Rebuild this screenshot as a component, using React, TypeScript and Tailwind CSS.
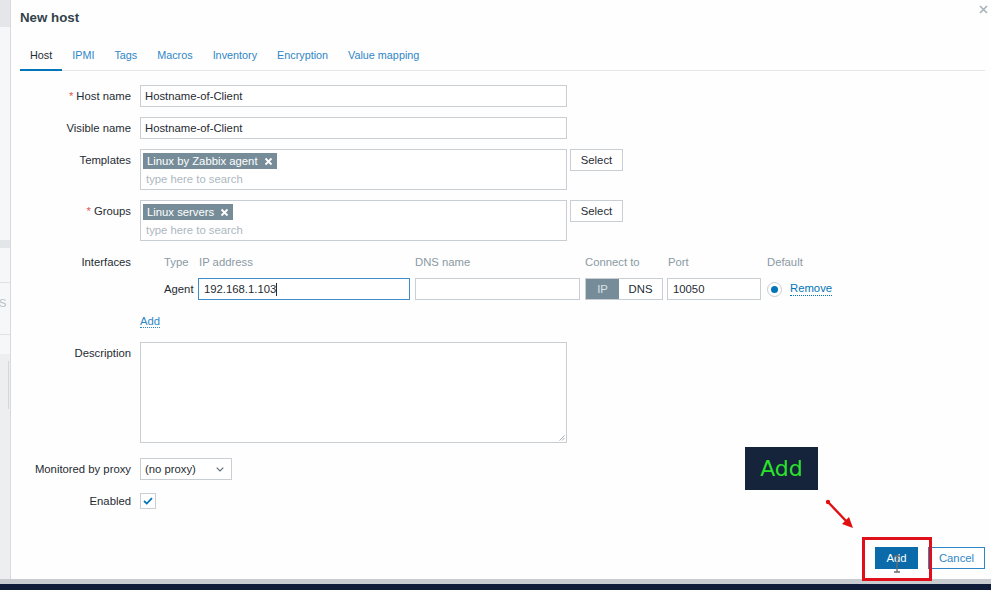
import React from "react";

const font = { fontFamily: '"Liberation Sans", Arial, sans-serif' };

function SideStrip() {
  // sliver of the page behind the modal
  return (
    <div className="w-[11px] shrink-0 flex flex-col border-r border-[#d6dade]">
      <div className="h-[27px] bg-[#e4e6e9]" />
      <div className="h-[213px] bg-[#f6f7f8]" />
      <div className="h-[8px] bg-[#e3e6e8]" />
      <div className="h-[35px] bg-[#f6f7f8] border-b border-[#dfe2e5]" />
      <div className="h-[52px] bg-[#f6f7f8] border-b border-[#dfe2e5] relative">
        <span className="absolute left-[-1px] top-[12px] text-[11px] text-[#b7bfc5]">S</span>
      </div>
      <div className="h-[19px] bg-[#f6f7f8]" />
      <div className="flex-1 bg-[#eceef0] pl-[8px] pt-[7px]">
        <div className="w-px h-[48px] bg-[#d3d7da]" />
      </div>
    </div>
  );
}

function Label({ text, required }: { text: string; required?: boolean }) {
  return (
    <div className="w-[111px] shrink-0 text-right leading-[22px] text-[#1f2c33]">
      {required && <span className="text-[#e45959] mr-[3px]">*</span>}
      {text}
    </div>
  );
}

function TextInput({ value, w = 427 }: { value: string; w?: number }) {
  return (
    <div
      className="h-[22px] border border-[#c8ced2] bg-white pl-[4px] leading-[20px] text-[#1f2c33]"
      style={{ width: w }}
    >
      {value}
    </div>
  );
}

function SelectBtn() {
  return (
    <div className="w-[53px] h-[22px] border border-[#c8ced2] bg-white text-center leading-[20px] text-[#1f2c33]">
      Select
    </div>
  );
}

function Multiselect({ tag }: { tag: string }) {
  return (
    <div className="w-[427px] h-[41px] border border-[#c8ced2] bg-white pt-[3px] pl-[2px]">
      <span className="inline-flex items-center h-[16px] bg-[#768d99] text-white px-[4px] leading-[16px]">
        {tag}
        <svg width="9" height="9" viewBox="0 0 9 9" className="ml-[6px]">
          <path d="M1.5 1.5 L7.5 7.5 M7.5 1.5 L1.5 7.5" stroke="#fff" strokeWidth="1.8" />
        </svg>
      </span>
      <div className="pl-[3px] mt-[1px] leading-[16px] text-[#acb8bf]">type here to search</div>
    </div>
  );
}

const tabs = ["Host", "IPMI", "Tags", "Macros", "Inventory", "Encryption", "Value mapping"];

export default function App() {
  return (
    <div className="relative w-[991px] h-[590px] overflow-hidden flex flex-col bg-[#0f1b38]" style={font}>
      <div className="flex h-[579px]">
        <SideStrip />
        <div className="flex-1 bg-[#fefefe] flex flex-col pl-[9px] pr-[6px] text-[11.3px]">
          <div className="flex justify-between">
            <h1 className="mt-[10px] text-[13.3px] leading-[16px] font-bold text-[#34424b]">New host</h1>
            <svg width="9" height="9" viewBox="0 0 9 9" className="mt-[5px] -mr-[3px]">
              <path d="M1 1 L8 8 M8 1 L1 8" stroke="#a6b1b8" strokeWidth="1.6" />
            </svg>
          </div>

          <div className="mt-[22px] flex border-b border-[#e4e7e9] text-[10.8px]">
            {tabs.map((t, i) => (
              <div
                key={t}
                className={`px-[10px] pb-[7px] leading-[14px] -mb-px border-b-2 ${
                  i === 0 ? "border-[#0275b8] text-[#1f2c33]" : "border-transparent text-[#2f86c6]"
                }`}
              >
                {t}
              </div>
            ))}
          </div>

          <div className="mt-[14px] flex flex-col gap-[10px]">
            <div className="flex gap-[9px]">
              <Label text="Host name" required />
              <TextInput value="Hostname-of-Client" />
            </div>
            <div className="flex gap-[9px]">
              <Label text="Visible name" />
              <TextInput value="Hostname-of-Client" />
            </div>
            <div className="flex gap-[9px]">
              <Label text="Templates" />
              <div className="flex gap-[3px]">
                <Multiselect tag="Linux by Zabbix agent" />
                <SelectBtn />
              </div>
            </div>
            <div className="flex gap-[9px]">
              <Label text="Groups" required />
              <div className="flex gap-[3px]">
                <Multiselect tag="Linux servers" />
                <SelectBtn />
              </div>
            </div>

            <div className="flex gap-[9px]">
              <Label text="Interfaces" />
              <div className="flex flex-col pt-[3px]">
                <div className="flex h-[16px] leading-[16px] text-[#8a9aa3]">
                  <div className="w-[58px] pl-[24px]">Type</div>
                  <div className="w-[212px] pl-[1px]">IP address</div>
                  <div className="w-[165px] ml-[5px]">DNS name</div>
                  <div className="w-[78px] ml-[5px]">Connect to</div>
                  <div className="w-[94px] ml-[4px] pl-[1px]">Port</div>
                  <div className="ml-[6px]">Default</div>
                </div>
                <div className="flex items-center mt-[8px] h-[22px] text-[#1f2c33]">
                  <div className="w-[58px] pl-[24px]">Agent</div>
                  <div className="w-[212px] h-[22px] border border-[#3f8ccb] bg-white pl-[5px] leading-[20px] flex items-center">
                    192.168.1.103
                    <span className="inline-block w-px h-[13px] bg-[#1f2c33]" />
                  </div>
                  <div className="w-[165px] h-[22px] ml-[5px] border border-[#c8ced2] bg-white" />
                  <div className="w-[78px] h-[22px] ml-[5px] flex border border-[#c8ced2]">
                    <div className="w-[33px] bg-[#768d99] text-[#dce3e7] text-center leading-[20px]">IP</div>
                    <div className="flex-1 bg-white text-center leading-[20px]">DNS</div>
                  </div>
                  <div className="w-[94px] h-[22px] ml-[4px] border border-[#c8ced2] bg-white pl-[5px] leading-[20px]">
                    10050
                  </div>
                  <div className="ml-[6px] w-[15px] h-[15px] rounded-full border border-[#c8ced2] bg-white flex items-center justify-center">
                    <div className="w-[7px] h-[7px] rounded-full bg-[#0275b8]" />
                  </div>
                  <span className="ml-[8px] text-[#0275b8] border-b border-dotted border-[#0275b8] leading-[13px]">
                    Remove
                  </span>
                </div>
                <div className="mt-[13px] h-[19px]">
                  <span className="text-[#2f86c6] border-b border-dotted border-[#2f86c6] leading-[14px]">Add</span>
                </div>
              </div>
            </div>

            <div className="flex gap-[9px]">
              <Label text="Description" />
              <div className="relative w-[427px] h-[101px] border border-[#c8ced2] bg-white">
                <svg width="6" height="6" viewBox="0 0 6 6" className="absolute right-[1px] bottom-[1px]">
                  <path d="M5.5 0.5 L0.5 5.5 M5.5 3 L3 5.5" stroke="#9aa5ab" strokeWidth="0.9" />
                </svg>
              </div>
            </div>

            <div className="flex gap-[9px] items-center mt-[5px]">
              <Label text="Monitored by proxy" />
              <div className="w-[92px] h-[22px] border border-[#c8ced2] bg-white flex items-center justify-between pl-[4px] pr-[7px] text-[#1f2c33]">
                (no proxy)
                <svg width="8" height="5" viewBox="0 0 8 5">
                  <path d="M0.7 0.7 L4 4 L7.3 0.7" stroke="#5a6a73" strokeWidth="1.1" fill="none" />
                </svg>
              </div>
            </div>

            <div className="flex gap-[9px] items-center">
              <Label text="Enabled" />
              <div className="w-[16px] h-[16px] border border-[#c8ced2] bg-white flex items-center justify-center">
                <svg width="10" height="8" viewBox="0 0 10 8">
                  <path d="M1 4 L3.8 6.6 L9 1.2" stroke="#0275b8" strokeWidth="1.8" fill="none" />
                </svg>
              </div>
            </div>
          </div>

          <div className="mt-auto flex justify-end gap-[10px] pb-[10px]">
            <div className="w-[43px] h-[22px] bg-[#0a6aaa] text-white text-center leading-[22px]">Add</div>
            <div className="w-[57px] h-[22px] border border-[#2f86c6] bg-white text-[#2f86c6] text-center leading-[20px]">
              Cancel
            </div>
          </div>
        </div>
      </div>
      <div className="h-[5px] bg-[#c8ccd0]" />
      <div className="flex-1 bg-[#0f1b38]" />

      {/* annotation overlay */}
      <div
        className="absolute left-[745px] top-[447px] w-[73px] h-[43px] bg-[#15233b] flex items-center justify-center text-[22px] text-[#2be22b]"
        style={{ fontFamily: '"DejaVu Sans", sans-serif' }}
      >
        Add
      </div>
      <svg className="absolute left-[820px] top-[494px]" width="40" height="40" viewBox="0 0 40 40">
        <circle cx="8" cy="8" r="2.2" fill="#e01010" />
        <path d="M8 8 L28 29" stroke="#e01010" strokeWidth="2.4" />
        <path d="M33 34 L22 30 L29 23 Z" fill="#e01010" />
      </svg>
      <div className="absolute left-[862px] top-[537px] w-[70px] h-[44px] border-[3px] border-[#e0101a]" />
      <svg className="absolute left-[893px] top-[555px]" width="8" height="18" viewBox="0 0 8 18">
        <path d="M1 1 H7 M4 1 V17 M1 17 H7" stroke="#6b6b6b" strokeWidth="1.3" fill="none" />
      </svg>
    </div>
  );
}
